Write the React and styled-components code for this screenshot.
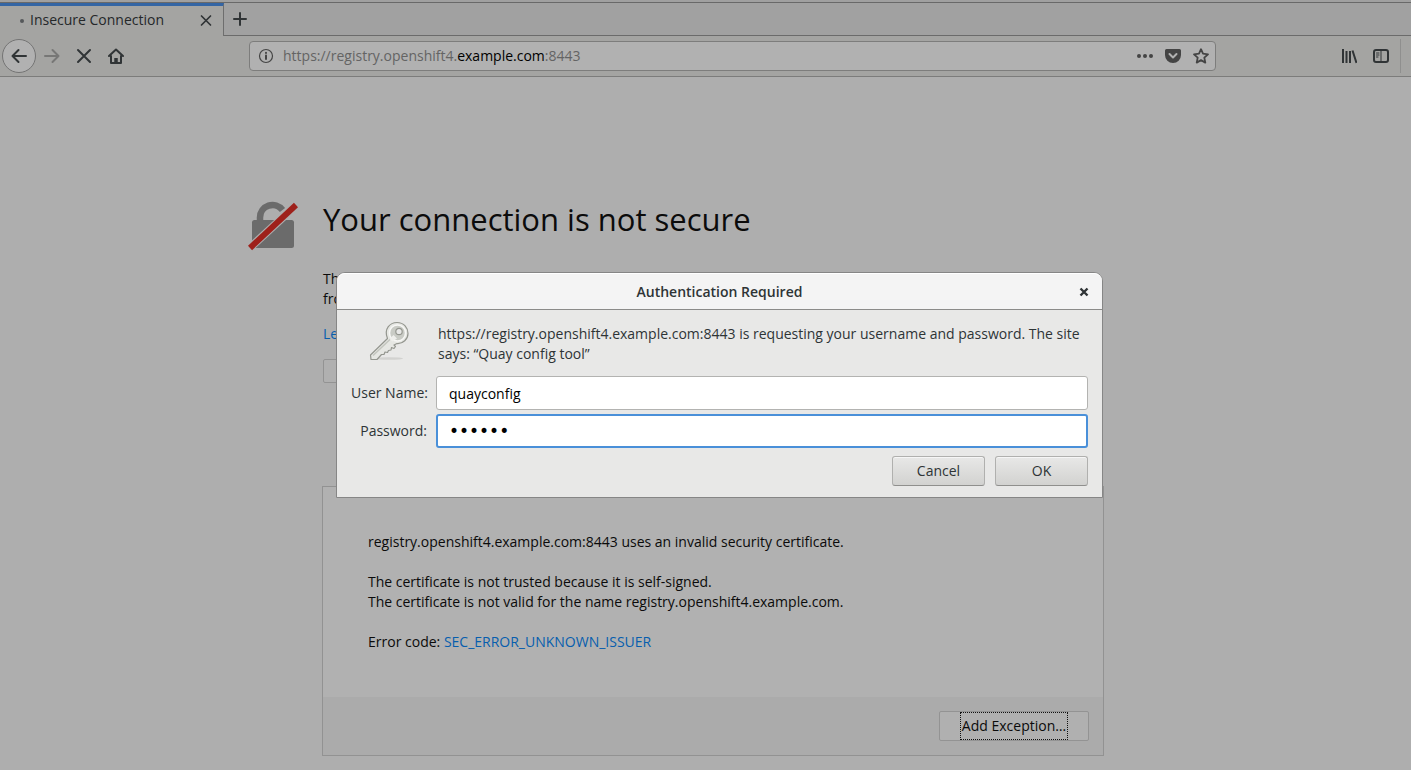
import React from 'react';
import styled, { createGlobalStyle } from 'styled-components';

const Global = createGlobalStyle`
  *, *::before, *::after { box-sizing: border-box; }
  html, body, #root { height: 100%; }
  body {
    margin: 0;
    background: #aeaeae;
    color: #0b0b0b;
    font-family: "Open Sans", "Noto Sans", sans-serif;
    font-size: 14px;
    line-height: 20px;
  }
  button, input { font: inherit; color: inherit; }
  svg { display: block; flex: none; }
`;

const Window = styled.div`
  position: relative;
  min-height: 100%;
  display: flex;
  flex-direction: column;
`;

const TabStrip = styled.header`
  display: flex;
  height: 36px;
  padding-top: 3px;
  background: linear-gradient(#a0a0a0 2px, #696969 2px, #696969 3px, #a1a1a1 3px);
`;

const Tab = styled.div`
  display: flex;
  align-items: center;
  width: 224px;
  padding: 0 9px 0 20px;
  border-top: 3px solid #3465a4;
  border-right: 1px solid #6e6e6e;
  background: #a4a4a2;
  color: #25282a;
`;

const LoadingDot = styled.span`
  width: 4px;
  height: 4px;
  margin-right: 6px;
  border-radius: 50%;
  background: #55585a;
`;

const TabTitle = styled.span`
  flex: 1;
  padding-bottom: 2px;
  white-space: nowrap;
`;

const IconButton = styled.button`
  display: flex;
  align-items: center;
  justify-content: center;
  width: ${p => p.$width || 32}px;
  height: 32px;
  padding: 0;
  border: 0;
  background: none;
  color: ${p => p.$color || '#303436'};
`;

const CloseTab = styled(IconButton)`
  width: 16px;
  height: 16px;
`;

const TabStripRest = styled.div`
  flex: 1;
  display: flex;
  align-items: center;
  border-bottom: 1px solid #6b6b6b;
`;

const Toolbar = styled.nav`
  display: flex;
  align-items: center;
  height: 41px;
  padding-left: 2px;
  border-bottom: 1px solid #7c7c7b;
  background: #a4a4a2;
`;

const BackButton = styled(IconButton)`
  width: 34px;
  height: 34px;
  border: 1px solid #747474;
  border-radius: 50%;
  background: #b1b1b1;
`;

const Spacer = styled.div`
  flex: 117 1 0;
`;

const UrlBar = styled.div`
  flex: 957 1 0;
  display: flex;
  align-items: center;
  height: 30px;
  padding: 0 0 0 8px;
  border: 1px solid #7d7d7c;
  border-radius: 4px;
  background: #b1b1b1;
  color: #444;
`;

const UrlText = styled.div`
  flex: 1;
  padding-left: 9px;
  color: #646464;
  white-space: nowrap;
`;

const UrlHost = styled.span`
  color: #000;
`;

const ToolbarEnd = styled.div`
  width: 11px;
  height: 34px;
  margin-left: 3px;
  border-left: 1px solid #8f8f8e;
`;

const Main = styled.main`
  display: flex;
  justify-content: center;
  padding: 122px 59px 14px 0;
`;

const ErrorPage = styled.article`
  display: grid;
  grid-template-columns: 50px minmax(0, 782px);
  column-gap: 24px;
`;

const LockCell = styled.div`
  padding-top: 2px;
`;

const Intro = styled.div`
  padding-left: 1px;
`;

const Heading = styled.h1`
  margin: 0;
  font-size: 31px;
  font-weight: 400;
  line-height: 40px;
`;

const Explanation = styled.p`
  margin: 30px 0 15px;
`;

const Link = styled.a`
  color: #075eae;
  text-decoration: none;
`;

const Actions = styled.div`
  display: flex;
  justify-content: space-between;
  margin: 15px 15px 0 0;
`;

const PageButton = styled.button`
  min-width: 150px;
  height: ${p => p.$height || 24}px;
  padding: 0;
  border: 1px solid #939393;
  border-radius: 2px;
  background: #b0b0b0;
`;

const FocusedLabel = styled.span`
  display: inline-block;
  padding: 3px 1px;
  border: 1px dotted #111;
`;

const Panel = styled.section`
  margin-top: 103px;
  border: 1px solid #929292;
  background: #b1b1b1;
`;

const PanelBody = styled.div`
  padding: 45px 45px 25px;

  p { margin: 0 0 20px; }
`;

const PanelFooter = styled.div`
  display: flex;
  justify-content: flex-end;
  padding: 14px;
  background: #ababab;
`;

const DialogLayer = styled.div`
  position: absolute;
  inset: 0;
  display: flex;
  align-items: center;
  justify-content: center;
  padding-left: 28px;
`;

const Dialog = styled.form`
  width: 767px;
  border: 1px solid #868686;
  border-radius: 9px 9px 0 0;
  background: #e8e8e7;
  color: #2e3436;
`;

const TitleBar = styled.div`
  display: grid;
  grid-template-columns: 32px 1fr 32px;
  align-items: center;
  height: 37px;
  padding: 0 2px;
  border-top: 1px solid #fff;
  border-bottom: 1px solid #8b8b89;
  border-radius: 8px 8px 0 0;
  background: #f4f4f4;
`;

const DialogTitle = styled.h2`
  grid-column: 2;
  margin: 0;
  font-size: 14px;
  font-weight: 600;
  line-height: 20px;
  text-align: center;
`;

const DialogBody = styled.div`
  display: grid;
  grid-template-columns: 76px 1fr;
  column-gap: 9px;
  row-gap: 4px;
  align-items: center;
  padding: 11px 14px 8px;
`;

const Message = styled.p`
  margin: 0 0 5px;
  padding: 3px 2px;
`;

const KeyCell = styled.div`
  display: flex;
  align-self: start;
  justify-content: center;
`;

const FieldLabel = styled.label`
  text-align: right;
  white-space: nowrap;
`;

const Field = styled.input`
  width: 100%;
  height: 34px;
  padding: 0 ${p => (p.$active ? 11 : 12)}px;
  border: ${p => (p.$active ? '2px solid #4a90d9' : '1px solid #b3b3b1')};
  border-radius: 3px;
  outline: none;
  background: #fff;
  color: #000;

  &[type='password'] {
    font-family: "DejaVu Sans", sans-serif;
    font-size: 17px;
  }
`;

const DialogActions = styled.div`
  display: flex;
  justify-content: flex-end;
  gap: 10px;
  padding: 0 14px 11px;
`;

const DialogButton = styled.button`
  width: 93px;
  height: 30px;
  padding: 0;
  border: 1px solid #b0b0ae;
  border-bottom-color: #8f8f8d;
  border-radius: 3px;
  background: linear-gradient(#e8e8e7, #d2d2d0);
  box-shadow: inset 0 1px #f6f6f6;
`;

const Glyph = ({ size = 16, width = 2, children }) => (
  <svg width={size} height={size} viewBox="0 0 16 16" fill="none" stroke="currentColor"
    strokeWidth={width} strokeLinecap="round" strokeLinejoin="round" aria-hidden="true">
    {children}
  </svg>
);

const BrokenLock = () => (
  <svg width="50" height="50" viewBox="0 0 50 50" aria-hidden="true">
    <path d="M12 20v-3.500a12.500 12.500 0 0 1 22.500-7.500" fill="none" stroke="#6b6b6b" strokeWidth="6.500" />
    <rect x="4" y="19" width="42" height="28" rx="2.500" fill="#6b6b6b" />
    <path d="M0 48.500 50 2.500" stroke="#aeaeae" strokeWidth="8" />
    <path d="M2 47 48 4" stroke="#9e211b" strokeWidth="6" />
  </svg>
);

const Key = () => (
  <svg width="40" height="40" viewBox="0 0 40 40" aria-hidden="true">
    <ellipse cx="20" cy="37.500" rx="14" ry="1.300" fill="#d2d2d0" />
    <path d="M1.500 34 18.500 17.500C14.500 8 21 1.500 28 1.500S39 7 39 12.500 34 23 28 22.500l-3 1.500 1.500 1.500-1.500 2-2.500-1-.5 2.500-2.500.500-1 2-2.500-.500-1 2.500-2.500 0-4.500 5H2z"
      fill="#e6e7e3" stroke="#94968f" strokeWidth="1.200" strokeLinejoin="round" />
    <path d="m4 34.500 18-17" stroke="#c3c5be" strokeWidth="1.500" />
    <circle cx="28.500" cy="12" r="8" fill="#c9cbc5" stroke="#f7f7f5" strokeWidth="1.500" />
    <path d="m20.500 18 4-4 3.500 3.500-4.500 3z" fill="#efefec" />
    <circle cx="30" cy="10.500" r="3.200" fill="#e8e8e7" stroke="#94968f" strokeWidth="1.200" />
  </svg>
);

export default function App() {
  return (
    <Window>
      <Global />
      <TabStrip>
        <Tab>
          <LoadingDot />
          <TabTitle>Insecure Connection</TabTitle>
          <CloseTab aria-label="Close tab">
            <Glyph width={1.7}><path d="m3.500 3 9 9m0-9-9 9" /></Glyph>
          </CloseTab>
        </Tab>
        <TabStripRest>
          <IconButton aria-label="New tab">
            <Glyph><path d="M8 2v12M2 8h12" /></Glyph>
          </IconButton>
        </TabStripRest>
      </TabStrip>

      <Toolbar>
        <BackButton aria-label="Back">
          <Glyph><path d="M15 8H1.500m6-6-6 6 6 6" /></Glyph>
        </BackButton>
        <IconButton aria-label="Forward" $color="#777776">
          <Glyph><path d="M1 8h13.500m-6-6 6 6-6 6" /></Glyph>
        </IconButton>
        <IconButton aria-label="Stop">
          <Glyph><path d="m2 2 12 12m0-12L2 14" /></Glyph>
        </IconButton>
        <IconButton aria-label="Home">
          <Glyph>
            <path d="m1 8 7-6.500L15 8M3 8v7h10V8" />
            <path d="M8 15v-5" strokeWidth="3.500" strokeLinecap="butt" />
          </Glyph>
        </IconButton>
        <Spacer />
        <UrlBar>
          <Glyph width={1.2}>
            <circle cx="8" cy="8" r="6.500" />
            <path d="M8 7.500V11M8 4.800v.1" strokeWidth="2" />
          </Glyph>
          <UrlText>https://registry.openshift4.<UrlHost>example.com</UrlHost>:8443</UrlText>
          <IconButton $width={28} $color="#444" aria-label="Page actions">
            <Glyph width={0}>
              <g fill="currentColor"><circle cx="2" cy="8" r="2" /><circle cx="8" cy="8" r="2" /><circle cx="14" cy="8" r="2" /></g>
            </Glyph>
          </IconButton>
          <IconButton $width={28} $color="#444" aria-label="Save to Pocket">
            <Glyph>
              <path d="M1.500 1h13A1.500 1.500 0 0 1 16 2.500V7A8 8 0 0 1 0 7V2.500A1.500 1.500 0 0 1 1.500 1z" fill="currentColor" stroke="none" />
              <path d="m4.500 6 3.500 3.500L11.500 6" stroke="#b1b1b1" />
            </Glyph>
          </IconButton>
          <IconButton $width={28} $color="#444" aria-label="Bookmark this page">
            <Glyph width={1.8}>
              <path d="m8 1.200 2 4.500 5 .6-3.700 3.300 1 5L8 12.100l-4.300 2.500 1-5L1 6.300l5-.6z" />
            </Glyph>
          </IconButton>
        </UrlBar>
        <Spacer />
        <IconButton aria-label="Library">
          <Glyph>
            <path d="M2 1v14M5.500 3v12M9 3v12M11.500 2.500 15.500 15" strokeLinecap="butt" />
          </Glyph>
        </IconButton>
        <IconButton aria-label="Sidebars">
          <Glyph>
            <rect x="1" y="2" width="14" height="12" rx="2" />
            <path d="M8 2v12M3.500 5h2.500M3.500 7h2.500M3.500 9h1.500" strokeWidth="1" />
          </Glyph>
        </IconButton>
        <ToolbarEnd />
      </Toolbar>

      <Main>
        <ErrorPage>
          <LockCell><BrokenLock /></LockCell>
          <div>
            <Intro>
              <Heading>Your connection is not secure</Heading>
              <Explanation>
                The owner of registry.openshift4.example.com has configured their website improperly. To protect your information from being stolen, Firefox has not connected to this website.
              </Explanation>
              <Link href="#learn">Learn more…</Link>
              <Actions>
                <PageButton>Go Back</PageButton>
                <PageButton>Advanced</PageButton>
              </Actions>
            </Intro>
            <Panel>
              <PanelBody>
                <p>registry.openshift4.example.com:8443 uses an invalid security certificate.</p>
                <p>
                  The certificate is not trusted because it is self-signed.<br />
                  The certificate is not valid for the name registry.openshift4.example.com.
                </p>
                <p>Error code: <Link href="#code">SEC_ERROR_UNKNOWN_ISSUER</Link></p>
              </PanelBody>
              <PanelFooter>
                <PageButton $height={30}><FocusedLabel>Add Exception…</FocusedLabel></PageButton>
              </PanelFooter>
            </Panel>
          </div>
        </ErrorPage>
      </Main>

      <DialogLayer>
        <Dialog role="dialog" aria-labelledby="auth-title" onSubmit={e => e.preventDefault()}>
          <TitleBar>
            <DialogTitle id="auth-title">Authentication Required</DialogTitle>
            <IconButton type="button" aria-label="Close dialog">
              <Glyph width={2.4}><path d="m4.500 4.500 7 7m0-7-7 7" strokeLinecap="butt" /></Glyph>
            </IconButton>
          </TitleBar>
          <DialogBody>
            <KeyCell><Key /></KeyCell>
            <Message>
              https://registry.openshift4.example.com:8443 is requesting your username and password. The site says: “Quay config tool”
            </Message>
            <FieldLabel htmlFor="user">User Name:</FieldLabel>
            <Field id="user" type="text" defaultValue="quayconfig" />
            <FieldLabel htmlFor="pass">Password:</FieldLabel>
            <Field id="pass" type="password" defaultValue="secret" $active />
          </DialogBody>
          <DialogActions>
            <DialogButton type="button">Cancel</DialogButton>
            <DialogButton type="submit">OK</DialogButton>
          </DialogActions>
        </Dialog>
      </DialogLayer>
    </Window>
  );
}
